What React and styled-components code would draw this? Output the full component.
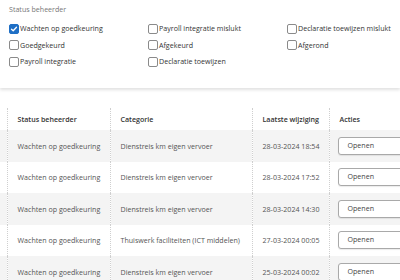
import React from "react";
import styled, { createGlobalStyle } from "styled-components";

const Global = createGlobalStyle`
  html, body { margin: 0; padding: 0; background: #fff; }
  body { font-family: "Open Sans", "Noto Sans", sans-serif; color: #444; overflow: hidden; }
`;

const Page = styled.div`
  width: 400px;
  height: 280px;
  overflow: hidden;
  background: #fff;
`;

const FilterPanel = styled.section`
  height: 88px;
  box-sizing: border-box;
  padding: 4px 9px 0;
  background: #fff;
  box-shadow: 0 2px 3px rgba(0, 0, 0, 0.12);
  position: relative;
  z-index: 1;
`;

const FilterLabel = styled.div`
  font-size: 7.1px;
  color: #777;
  line-height: 10px;
  margin-bottom: 9px;
`;

const CheckGrid = styled.div`
  display: grid;
  grid-template-columns: 139px 139px 139px;
  row-gap: 5.5px;
`;

const CheckItem = styled.label`
  display: flex;
  align-items: center;
  gap: 1px;
  font-size: 7.1px;
  line-height: 11px;
  color: #333;
  white-space: nowrap;
`;

const Box = styled.span`
  width: 10px;
  height: 10px;
  box-sizing: border-box;
  border-radius: 2px;
  border: 1px solid ${(p) => (p.$checked ? "#1f6fc5" : "#8a8a8a")};
  background: ${(p) => (p.$checked ? "#1f6fc5" : "#fff")};
  display: flex;
  align-items: center;
  justify-content: center;
  flex: none;
`;

const Table = styled.table`
  margin-top: 20px;
  border-collapse: collapse;
  table-layout: fixed;
  width: 460px;
  font-size: 7.1px;
`;

const Th = styled.th`
  text-align: left;
  font-weight: 600;
  color: #333;
  height: 22px;
  padding: 0 0 0 10px;
  border-left: 1px dotted #cfcfcf;
  white-space: nowrap;
  &:first-child { border-left: none; padding: 0; }
`;

const Row = styled.tr`
  background: ${(p) => (p.$odd ? "#f4f4f4" : "#fff")};
`;

const Td = styled.td`
  height: 31.5px;
  padding: 0 0 0 10px;
  border-left: 1px dotted #cfcfcf;
  color: #555;
  white-space: nowrap;
  overflow: hidden;
  &:first-child { border-left: none; padding: 0; }
`;

const ActionTd = styled(Td)`
  padding-left: 8px;
`;

const OpenButton = styled.button`
  display: block;
  width: 90px;
  height: 18px;
  box-sizing: border-box;
  border: 1px solid #a9a9a9;
  border-radius: 3px;
  background: #fff;
  box-shadow: 0 1px 1px rgba(0, 0, 0, 0.08);
  font-family: inherit;
  font-size: 7.1px;
  color: #444;
  text-align: left;
  padding: 0 0 2px 9px;
`;

const statuses = [
  ["Wachten op goedkeuring", true],
  ["Payroll integratie mislukt", false],
  ["Declaratie toewijzen mislukt", false],
  ["Goedgekeurd", false],
  ["Afgekeurd", false],
  ["Afgerond", false],
  ["Payroll integratie", false],
  ["Declaratie toewijzen", false],
];

const rows = [
  ["Wachten op goedkeuring", "Dienstreis km eigen vervoer", "28-03-2024 18:54"],
  ["Wachten op goedkeuring", "Dienstreis km eigen vervoer", "28-03-2024 17:52"],
  ["Wachten op goedkeuring", "Dienstreis km eigen vervoer", "28-03-2024 14:30"],
  ["Wachten op goedkeuring", "Thuiswerk faciliteiten (ICT middelen)", "27-03-2024 00:05"],
  ["Wachten op goedkeuring", "Dienstreis km eigen vervoer", "25-03-2024 00:02"],
];

function Check({ checked }) {
  return (
    <Box $checked={checked}>
      {checked && (
        <svg width="8" height="8" viewBox="0 0 8 8">
          <path d="M1.5 4.2 L3.2 5.8 L6.5 2.2" fill="none" stroke="#fff" strokeWidth="1.3" strokeLinecap="round" strokeLinejoin="round" />
        </svg>
      )}
    </Box>
  );
}

export default function App() {
  return (
    <Page>
      <Global />
      <FilterPanel>
        <FilterLabel>Status beheerder</FilterLabel>
        <CheckGrid>
          {statuses.map(([label, checked]) => (
            <CheckItem key={label}>
              <Check checked={checked} />
              {label}
            </CheckItem>
          ))}
        </CheckGrid>
      </FilterPanel>
      <Table>
        <colgroup>
          <col style={{ width: 7 }} />
          <col style={{ width: 103 }} />
          <col style={{ width: 142 }} />
          <col style={{ width: 77 }} />
          <col style={{ width: 131 }} />
        </colgroup>
        <thead>
          <tr>
            <Th />
            <Th>Status beheerder</Th>
            <Th>Categorie</Th>
            <Th>Laatste wijziging</Th>
            <Th>Acties</Th>
          </tr>
        </thead>
        <tbody>
          {rows.map((r, i) => (
            <Row key={i} $odd={i % 2 === 0}>
              <Td />
              <Td>{r[0]}</Td>
              <Td>{r[1]}</Td>
              <Td>{r[2]}</Td>
              <ActionTd>
                <OpenButton>Openen</OpenButton>
              </ActionTd>
            </Row>
          ))}
        </tbody>
      </Table>
    </Page>
  );
}
